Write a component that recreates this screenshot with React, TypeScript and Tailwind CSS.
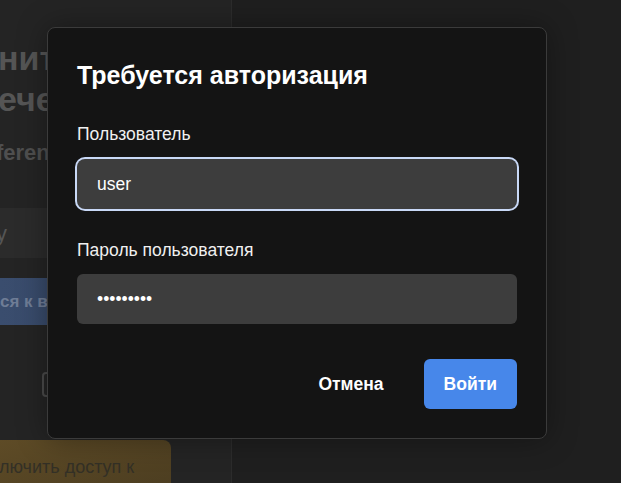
import React from "react";

export default function App() {
  return (
    <div
      className="relative w-[621px] h-[483px] overflow-hidden bg-[#1f1f1f]"
      style={{ fontFamily: '"Liberation Sans", Arial, sans-serif' }}
    >
      {/* dimmed page behind the dialog */}
      <div className="flex h-full">
        <div className="w-[232px] h-full bg-[#242424] border-r border-[#2c2c2c] overflow-hidden flex flex-col">
          <div className="shrink-0 pt-[38px] ml-[-2px] text-[34px] leading-[41px] font-bold text-[#555555] whitespace-nowrap">
            <div>нит</div>
            <div>ече</div>
          </div>
          <div className="shrink-0 mt-[18px] ml-[-4px] text-[22px] leading-[30px] font-bold text-[#4f4f4f] whitespace-nowrap">
            ferenc
          </div>
          <div className="shrink-0 mt-[40px] h-[50px] bg-[#2b2b2b] flex items-center text-[22px] text-[#555555] ml-[-4px]">
            у
          </div>
          <div className="shrink-0 mt-[20px] h-[47px] bg-gradient-to-r from-[#3a4d6e] to-[#33435f] flex items-center text-[17px] font-bold text-[#6f7d96] whitespace-nowrap">
            ся к вс
          </div>
          <div className="shrink-0 mt-[47px] ml-[42px] w-[20px] h-[25px] rounded-[4px] border-2 border-[#4a4a4a]" />
          <div className="shrink-0 mt-[43px] w-[172px] h-[60px] rounded-tr-[8px] bg-gradient-to-br from-[#5e4b26] to-[#4a3c20] pt-[14px] text-[18px] text-[#333026] whitespace-nowrap ml-[-1px]">
            лючить доступ к
          </div>
        </div>
        <div className="flex-1" />
      </div>

      {/* dialog */}
      <div className="absolute left-[47px] top-[27px] w-[500px] h-[412px] rounded-[8px] border border-[#3b3b3b] bg-[#141414] shadow-[0_0_30px_rgba(0,0,0,0.35)] px-[29px] pt-[33px] pb-[29px] flex flex-col">
        <h2 className="text-[25px] leading-[28px] font-bold text-white whitespace-nowrap">
          Требуется авторизация
        </h2>
        <label className="mt-[35px] text-[17.5px] leading-[20px] text-[#f0f0f0]">
          Пользователь
        </label>
        <div className="mt-[15px] h-[50px] rounded-[8px] bg-[#3d3d3d] ring-2 ring-[#c9d9f7] flex items-center px-[20px] text-[17.5px] text-white">
          user
        </div>
        <label className="mt-[31px] text-[17.5px] leading-[20px] text-[#f0f0f0]">
          Пароль пользователя
        </label>
        <div className="mt-[14px] h-[50px] rounded-[6px] bg-[#3d3d3d] flex items-center px-[20px] text-[17.5px] text-white">
          •••••••••
        </div>
        <div className="mt-auto flex justify-end gap-[20px]">
          <button className="h-[50px] px-[20px] rounded-[6px] text-[17.5px] font-bold text-white">
            Отмена
          </button>
          <button className="h-[50px] px-[20px] rounded-[6px] bg-[#4787ea] text-[17.5px] font-bold text-white">
            Войти
          </button>
        </div>
      </div>
    </div>
  );
}
